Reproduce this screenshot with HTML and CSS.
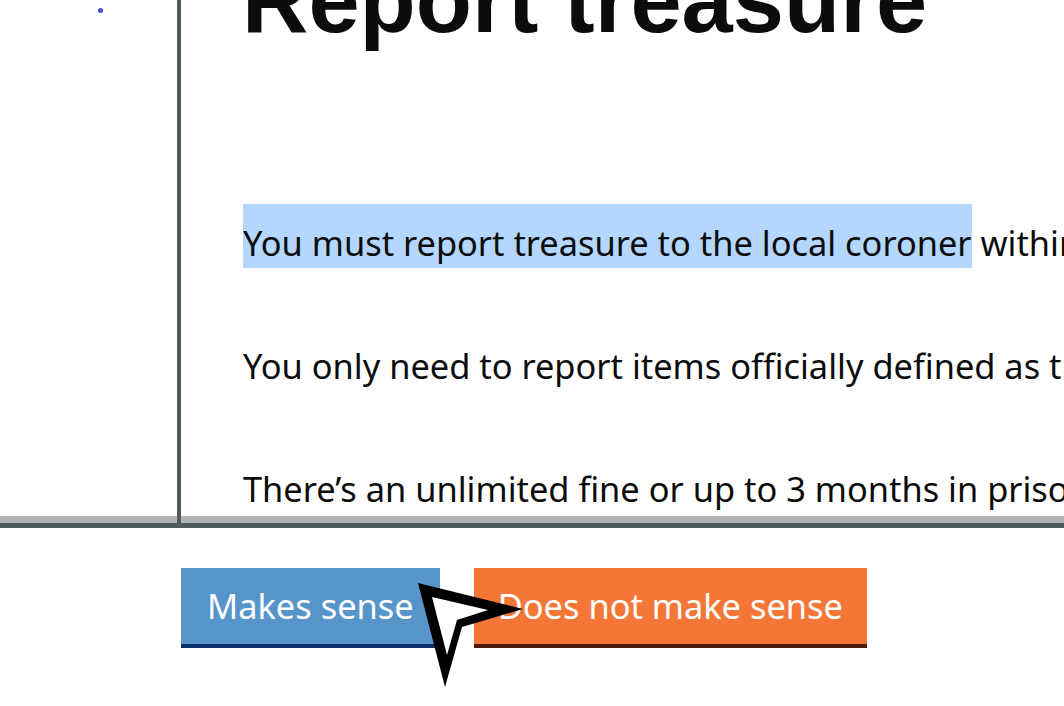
FILE: index.html
```html
<!DOCTYPE html>
<html lang="en">
<head>
<meta charset="utf-8">
<title>Report treasure</title>
<link rel="stylesheet" href="styles.css">
</head>
<body>
<div class="page">
  <div class="row">
    <aside class="sidebar"><span class="dot"></span></aside>
    <main class="content">
      <h1 class="title">Report treasure</h1>
      <p class="para"><span class="hl">You must report treasure to the local coroner</span> within 14 days of finding it.</p>
      <p class="para">You only need to report items officially defined as treasure.</p>
      <p class="para">There’s an unlimited fine or up to 3 months in prison if you don’t.</p>
    </main>
  </div>
  <div class="actions">
    <button class="btn btn-yes">Makes sense</button>
    <button class="btn btn-no">Does not make sense</button>
  </div>
</div>
<svg class="cursor" width="120" height="120" viewBox="0 0 120 120">
  <polygon points="0,0 105,26 44,44 27,104" fill="#000"/>
  <polygon points="14,14 70,27 39,37 29,72" fill="#fff"/>
</svg>
</body>
</html>
```

FILE: styles.css
```css
html, body {
  margin: 0;
  padding: 0;
  background: #fff;
  overflow: hidden;
  width: 1064px;
  height: 706px;
}
body {
  position: relative;
  font-family: "Noto Sans", "Open Sans", sans-serif;
  color: #0b0c0c;
}
.page {
  display: flex;
  flex-direction: column;
}
.row {
  display: flex;
  height: 523px;
  overflow: hidden;
  background: linear-gradient(to top, #b1b4b6 7px, #ffffff 7px);
  border-bottom: 5px solid #505a5f;
}
.sidebar {
  width: 177px;
  flex: none;
  border-right: 4px solid #505a5f;
  padding-top: 8px;
  box-sizing: content-box;
}
.dot {
  display: block;
  width: 5px;
  height: 5px;
  border-radius: 50%;
  background: #4c4cde;
  margin-left: 98px;
}
.content {
  flex: 1;
  padding-left: 61px;
  white-space: nowrap;
  min-width: 0;
}
.title {
  font-family: "Liberation Sans", Arial, sans-serif;
  font-weight: 700;
  font-size: 92px;
  line-height: 92px;
  margin: -46px 0 0 0;
  letter-spacing: 0;
}
.para {
  font-size: 34.4px;
  line-height: 64px;
  margin: 59px 0 0 0;
  padding-left: 1px;
}
.title + .para {
  margin-top: 165px;
}
.hl {
  background: #b4d7ff;
  padding: 15px 0 2px 0;
}
.actions {
  display: flex;
  gap: 34px;
  padding-left: 181px;
  margin-top: 40px;
}
.btn {
  font-family: "Noto Sans", "Open Sans", sans-serif;
  font-size: 34.4px;
  color: #fff;
  height: 76px;
  padding: 0 26px;
  border: 0;
  border-radius: 0;
  display: flex;
  align-items: center;
  line-height: 1;
}
.btn-yes {
  background: #5694ca;
  box-shadow: 0 4px 0 #0b2e6b;
}
.btn-no {
  background: #f47738;
  box-shadow: 0 4px 0 #4d1a10;
  padding: 0 24px;
}
.cursor {
  position: absolute;
  left: 418px;
  top: 583px;
}
```
